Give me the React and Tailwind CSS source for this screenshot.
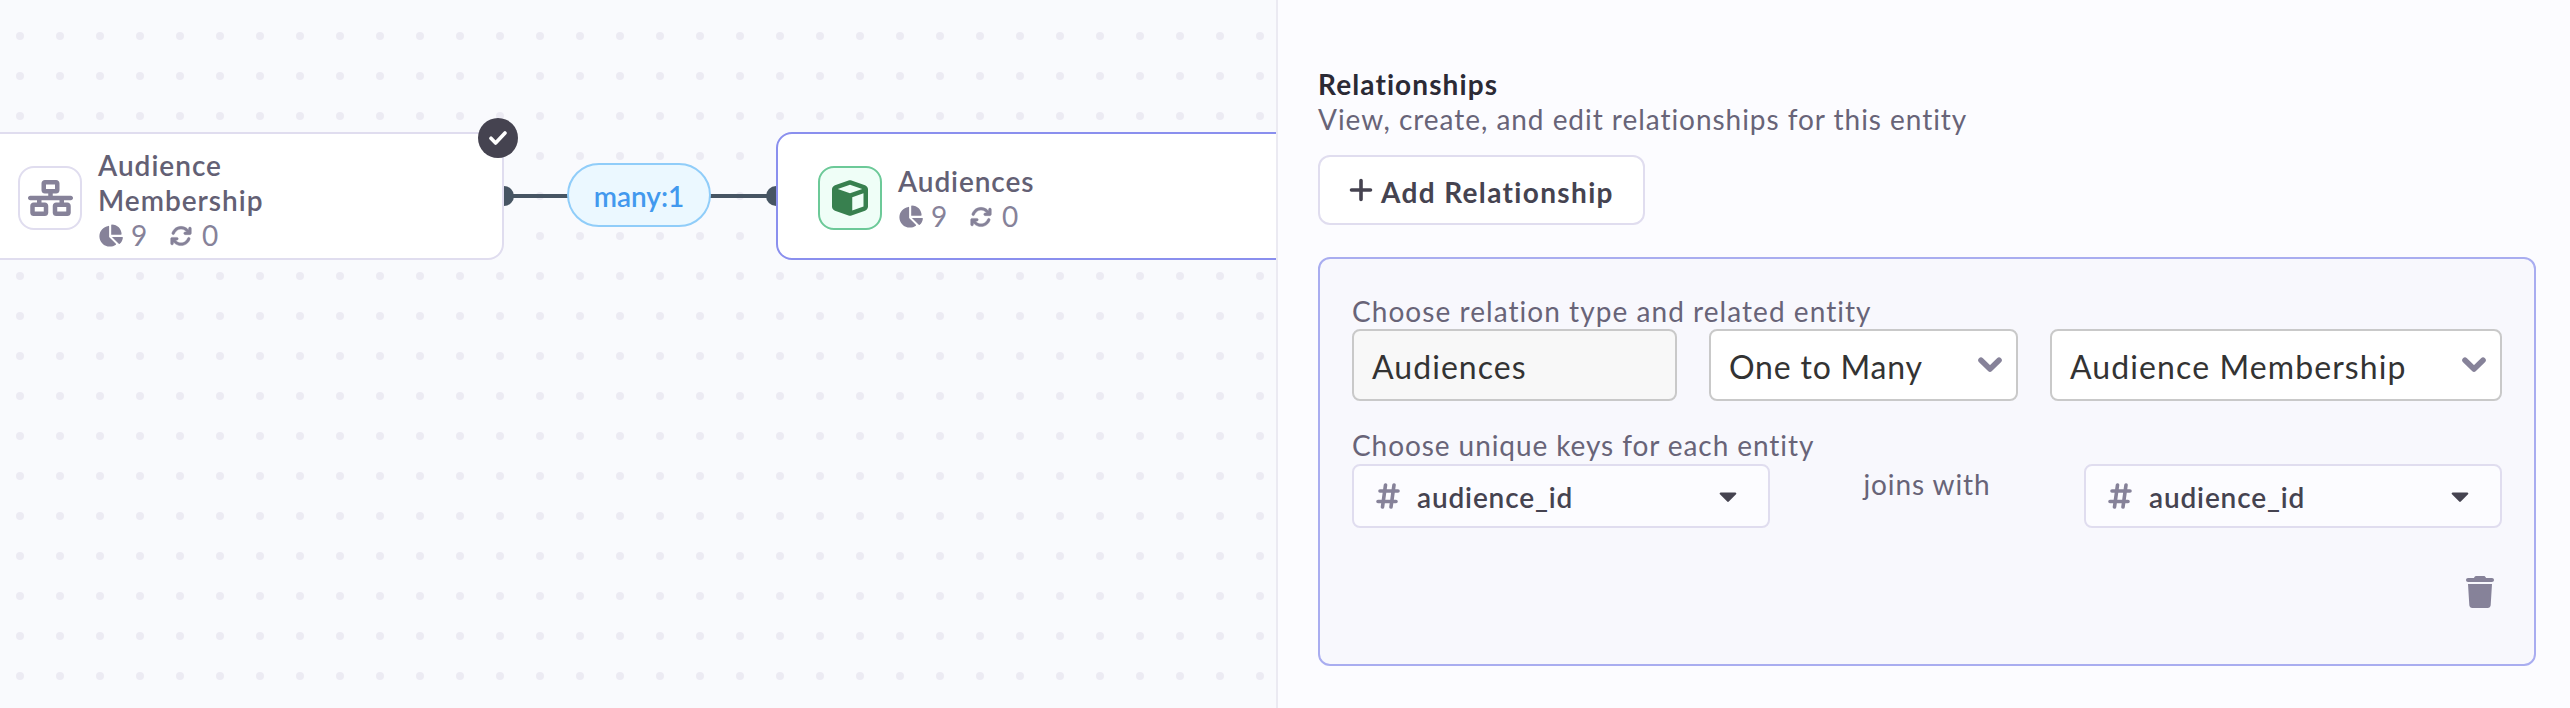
import React from "react";
import {
  FaNetworkWired,
  FaCube,
  FaChartPie,
  FaArrowsRotate,
  FaTrash,
} from "react-icons/fa6";
import { FaCaretDown } from "react-icons/fa";

function Stroke({ d, box, width, className }) {
  return (
    <svg
      viewBox={box}
      className={className}
      fill="none"
      stroke="currentColor"
      strokeWidth={width}
      strokeLinecap="round"
      strokeLinejoin="round"
    >
      <path d={d} />
    </svg>
  );
}

function Stats() {
  return (
    <div className="flex h-[35px] items-center text-[28px] leading-[35px] text-[#868299]">
      <FaChartPie className="h-[23px] w-[25px]" />
      <span className="ml-[8px] w-[16px]">9</span>
      <FaArrowsRotate className="ml-[23px] h-[22px] w-[22px]" strokeWidth="10" stroke="currentColor" />
      <span className="ml-[10px]">0</span>
    </div>
  );
}

function KeySelect() {
  return (
    <div className="flex h-[64px] w-[418px] items-center rounded-[8px] border-2 border-[#e0ddef] bg-[#fcfcff] pl-[22px] pr-[31px]">
      <Stroke
        box="0 0 24 26"
        d="M4 8H22M2 18.5H20M9.5 2L6.5 24M18 2L15 24"
        width="3.6"
        className="h-[26px] w-[24px] text-[#868299]"
      />
      <span className="ml-[17px] flex-1 pt-[2px] text-[28px] font-semibold leading-[35px] tracking-[0.85px] text-[#454350]">
        audience_id
      </span>
      <FaCaretDown className="h-[30px] w-[18px] text-[#454350]" />
    </div>
  );
}

function Select({ label, className }) {
  return (
    <div
      className={`flex h-[72px] items-center justify-between rounded-[8px] border-2 border-[#c9c9c9] bg-white pl-[18px] pr-[14px] text-[32px] leading-[38px] text-[#333333] ${className}`}
    >
      <span className="pt-[4px]">{label}</span>
      <Stroke
        box="0 0 24 16"
        d="M3 3.2L12 12L21 3.2"
        width="5.6"
        className="h-[16px] w-[24px] text-[#868299]"
      />
    </div>
  );
}

function Canvas() {
  return (
    <section className="relative h-full w-[1276px] shrink-0 overflow-hidden bg-[#f9fafd]">
      <svg className="absolute inset-0 h-full w-full">
        <defs>
          <pattern id="dots" width="40" height="40" patternUnits="userSpaceOnUse" y="16">
            <circle cx="20" cy="20" r="4" fill="#ecebf3" />
          </pattern>
        </defs>
        <rect width="100%" height="100%" fill="url(#dots)" />
        <line x1="504" y1="196" x2="776" y2="196" stroke="#475563" strokeWidth="4" />
        <circle cx="504" cy="196" r="10" fill="#475563" />
        <circle cx="776" cy="196" r="10" fill="#475563" />
      </svg>

      <div className="absolute left-[567px] top-[163px] flex h-[64px] w-[144px] items-center justify-center rounded-full border-2 border-[#90cdf9] bg-[#ebf8ff] pt-[3px] text-[28px] font-semibold leading-[35px] text-[#4299ee]">
        many:1
      </div>

      <div className="absolute left-[-16px] top-[132px] flex h-[128px] w-[520px] items-center rounded-[16px] border-2 border-[#e0ddef] bg-white pl-[32px]">
        <div className="mt-[4px] flex size-[64px] items-center justify-center rounded-[16px] border-2 border-[#e0ddef] bg-white">
          <FaNetworkWired className="h-[36px] w-[45px] text-[#868299]" />
        </div>
        <div className="ml-[16px] w-[200px] pt-[9px]">
          <div className="text-[28px] font-semibold leading-[35px] tracking-[1px] text-[#636074]">
            Audience Membership
          </div>
          <Stats />
        </div>
      </div>
      <div className="absolute left-[478px] top-[118px] flex size-[40px] items-center justify-center rounded-full bg-[#454350]">
        <Stroke
          box="0 0 18 14"
          d="M2 7.2L6.6 12L16 2"
          width="3.6"
          className="h-[14px] w-[18px] text-white"
        />
      </div>

      <div className="absolute left-[776px] top-[132px] flex h-[128px] w-[520px] items-center rounded-[16px] border-2 border-[#8a8fee] bg-white pl-[40px]">
        <div className="mt-[4px] flex size-[64px] items-center justify-center rounded-[16px] border-2 border-[#6cc998] bg-[#effef7]">
          <FaCube className="h-[36px] w-[36px] text-[#38804f]" />
        </div>
        <div className="ml-[16px] pt-[6px]">
          <div className="text-[28px] font-semibold leading-[35px] tracking-[0.9px] text-[#636074]">
            Audiences
          </div>
          <Stats />
        </div>
      </div>
    </section>
  );
}

export default function App() {
  return (
    <main className="flex h-[708px] w-[2570px] overflow-hidden font-['Lato',sans-serif]">
      <Canvas />
      <section className="flex-1 border-l-2 border-[#ebeaf2] bg-[#fcfcff] pl-[40px] pr-[34px] pt-[67px]">
        <h2 className="text-[28px] font-bold leading-[35px] tracking-[1.1px] text-[#2b2a35]">
          Relationships
        </h2>
        <p className="text-[28px] leading-[35px] tracking-[0.96px] text-[#686478]">
          View, create, and edit relationships for this entity
        </p>
        <button className="mt-[18px] flex h-[70px] w-[327px] items-center rounded-[12px] border-2 border-[#e0ddef] bg-white pl-[29px] text-[#454350]">
          <Stroke
            box="0 0 24 24"
            d="M12 2.5V21.5M2.5 12H21.5"
            width="3.6"
            className="h-[24px] w-[24px]"
          />
          <span className="ml-[8px] whitespace-nowrap pt-[4px] text-[28px] font-bold leading-[35px] tracking-[1.35px]">
            Add Relationship
          </span>
        </button>

        <div className="mt-[32px] h-[409px] rounded-[12px] border-2 border-[#a9adf0] bg-[#f8f8fd] px-[32px] pt-[35px]">
          <div className="text-[28px] leading-[35px] tracking-[1.05px] text-[#686478]">
            Choose relation type and related entity
          </div>
          <div className="flex gap-[32px]">
            <div className="flex h-[72px] w-[325px] items-center rounded-[8px] border-2 border-[#c9c9c9] bg-[#f8f8f8] pl-[18px] pt-[3px] text-[32px] leading-[38px] tracking-[1.05px] text-[#333333]">
              Audiences
            </div>
            <Select label="One to Many" className="w-[309px] tracking-[0.8px]" />
            <Select label="Audience Membership" className="w-[452px] tracking-[1.1px]" />
          </div>
          <div className="mt-[27px] text-[28px] leading-[35px] tracking-[0.92px] text-[#686478]">
            Choose unique keys for each entity
          </div>
          <div className="mt-px flex justify-between">
            <KeySelect />
            <div className="pt-[3px] text-[28px] leading-[35px] tracking-[0.9px] text-[#686478]">joins with</div>
            <KeySelect />
          </div>
          <div className="mt-[48px] flex justify-end pr-[8px]">
            <FaTrash className="h-[32px] w-[28px] text-[#868299]" />
          </div>
        </div>
      </section>
    </main>
  );
}
